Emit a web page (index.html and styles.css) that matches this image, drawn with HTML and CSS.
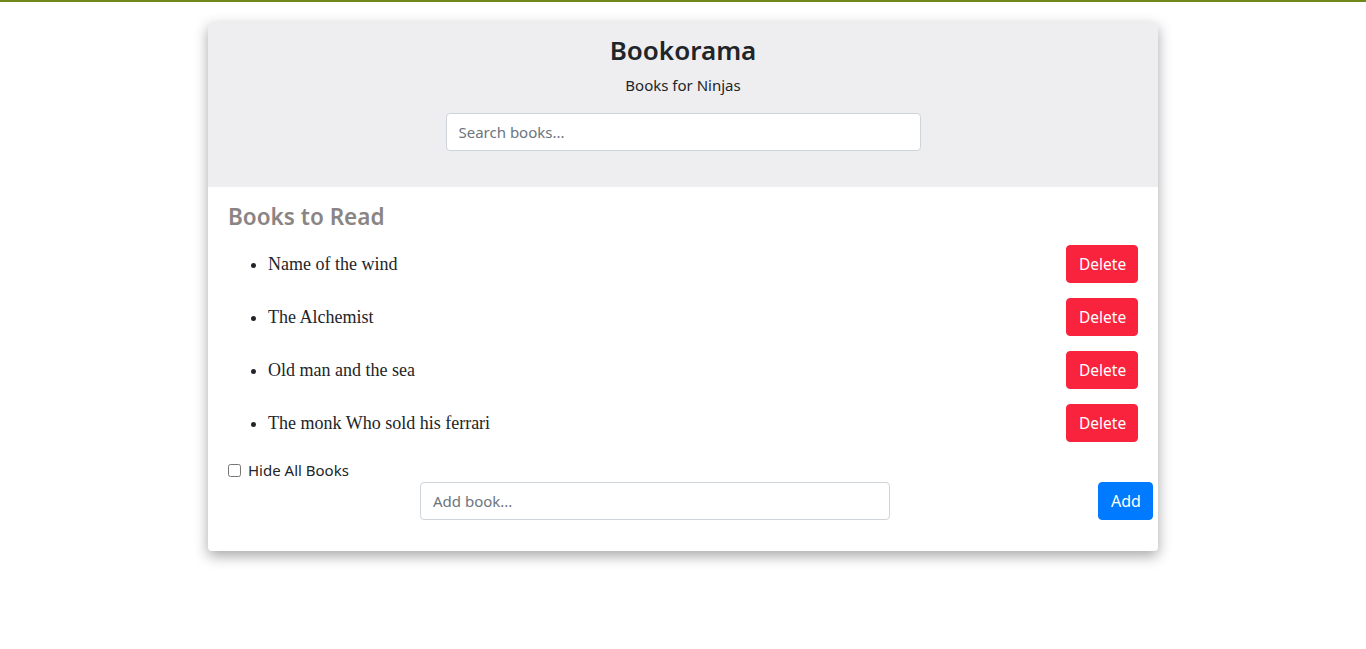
FILE: index.html
```html
<!DOCTYPE html>
<html>
<head>
<meta charset="utf-8">
<link rel="stylesheet" href="styles.css">
</head>
<body>
<div class="topbar"></div>
<div class="card">
  <header class="card-header">
    <h1 class="title">Bookorama</h1>
    <p class="subtitle">Books for Ninjas</p>
    <input class="field search" type="text" placeholder="Search books...">
  </header>
  <section class="card-body">
    <h2 class="list-title">Books to Read</h2>
    <ul class="books">
      <li><div class="book"><span class="name">Name of the wind</span><button class="btn btn-delete">Delete</button></div></li>
      <li><div class="book"><span class="name">The Alchemist</span><button class="btn btn-delete">Delete</button></div></li>
      <li><div class="book"><span class="name">Old man and the sea</span><button class="btn btn-delete">Delete</button></div></li>
      <li><div class="book"><span class="name">The monk Who sold his ferrari</span><button class="btn btn-delete">Delete</button></div></li>
    </ul>
    <label class="hide"><input type="checkbox" class="check"><span>Hide All Books</span></label>
    <form class="add-form">
      <input class="field add" type="text" placeholder="Add book...">
      <button type="button" class="btn btn-add">Add</button>
    </form>
  </section>
</div>
</body>
</html>
```

FILE: styles.css
```css
* { box-sizing: border-box; }
html, body { margin: 0; padding: 0; background: #fff; }
body {
  font-family: "Noto Sans", "Open Sans", sans-serif;
  color: #212529;
  min-height: 100vh;
  padding-bottom: 40px;
}
.topbar {
  height: 2px;
  background: #6f881c;
}
.card {
  width: 950px;
  margin: 20px auto 0;
  border-radius: 4px;
  background: #fff;
  box-shadow: 0 5px 14px rgba(0, 0, 0, 0.35);
  overflow: hidden;
}
.card-header {
  background: #eeeef0;
  height: 165px;
  padding-top: 10px;
  display: flex;
  flex-direction: column;
  align-items: center;
}
.title {
  margin: 0;
  font-size: 26px;
  font-weight: 600;
  line-height: 36px;
  color: #212529;
}
.subtitle {
  margin: 7px 0 0;
  font-size: 15px;
  line-height: 20px;
}
.field {
  height: 38px;
  border: 1px solid #ced4da;
  border-radius: 4px;
  padding: 6px 12px;
  font-family: inherit;
  font-size: 15px;
  color: #495057;
  background: #fff;
}
.field::placeholder { color: #6c757d; }
.search {
  width: 475px;
  margin-top: 18px;
}
.card-body {
  padding: 15px 20px 31px;
}
.list-title {
  margin: 0;
  font-size: 22.5px;
  font-weight: 600;
  line-height: 30px;
  color: #8a8584;
}
.books {
  margin: 13px 0 0;
  padding-left: 40px;
  font-family: "Liberation Serif", serif;
  font-size: 18px;
  color: #212529;
}
.books li + li { margin-top: 15px; }
.book {
  display: flex;
  justify-content: space-between;
  align-items: center;
}
.btn {
  height: 38px;
  border: 1px solid transparent;
  border-radius: 4px;
  padding: 0 12px;
  font-family: "Noto Sans", "Open Sans", sans-serif;
  font-size: 15.5px;
  color: #fff;
  cursor: pointer;
}
.btn-delete {
  width: 72px;
  background: #f9233e;
  border-color: #f9233e;
}
.btn-add {
  width: 55px;
  background: #007bff;
  border-color: #007bff;
  font-size: 16px;
}
.hide {
  display: flex;
  align-items: center;
  gap: 7px;
  margin-top: 16px;
  font-size: 15px;
  line-height: 24px;
  height: 24px;
}
.check {
  margin: 0;
  width: 13px;
  height: 13px;
}
.add-form {
  display: flex;
  justify-content: space-between;
  margin: 0 -15px 0 192px;
}
.add { width: 470px; }
```
